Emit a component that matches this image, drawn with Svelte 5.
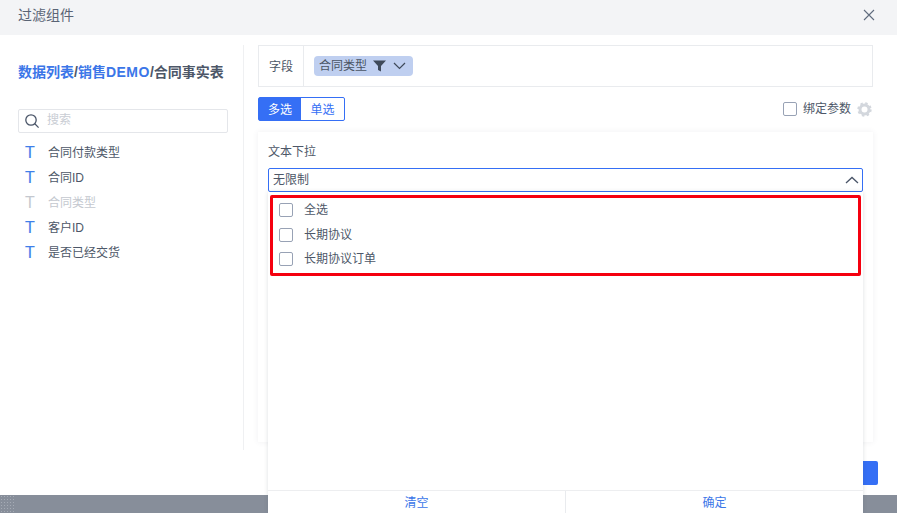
<script>
  const fields = [
    { name: '合同付款类型' },
    { name: '合同ID' },
    { name: '合同类型', off: true },
    { name: '客户ID' },
    { name: '是否已经交货' }
  ];
  const options = ['全选', '长期协议', '长期协议订单'];
</script>

<div class="page">
  <header class="head">
    <span class="title">过滤组件</span>
    <svg class="close" width="12" height="12" viewBox="0 0 12 12"><path d="M1 1l10 10M11 1L1 11" stroke="#5f6b7d" stroke-width="1.1" fill="none"/></svg>
  </header>

  <main class="main">
    <aside class="side">
      <div class="crumb"><span class="blue">数据列表</span>/<span class="blue">销售<span class="latin">DEMO</span></span>/合同事实表</div>
      <div class="search">
        <svg width="16" height="16" viewBox="0 0 16 16"><circle cx="7" cy="7" r="5.2" stroke="#4a5568" stroke-width="1.3" fill="none"/><path d="M10.8 10.8l3.8 3.8" stroke="#4a5568" stroke-width="1.3"/></svg>
        <span>搜索</span>
      </div>
      <ul class="fields">
        {#each fields as f}
          <li class:off={f.off}><b>T</b><span>{f.name}</span></li>
        {/each}
      </ul>
    </aside>

    <section class="right">
      <div class="fieldbox">
        <div class="label">字段</div>
        <div class="tagcell">
          <div class="tag">
            <span>合同类型</span>
            <svg class="funnel" width="13" height="12" viewBox="0 0 13 12"><path d="M0 0.500h13L8 6v5.500L5 10V6z" fill="#3f4a5a"/></svg>
            <svg width="13" height="8" viewBox="0 0 13 8"><path d="M1 1l5.500 5.500L12 1" stroke="#3f4a5a" stroke-width="1.200" fill="none"/></svg>
          </div>
        </div>
      </div>

      <div class="bar">
        <div class="seg"><span class="on">多选</span><span>单选</span></div>
        <div class="bind">
          <i class="check"></i>
          <span>绑定参数</span>
          <svg width="15" height="15" viewBox="0 0 15 15"><circle cx="7.500" cy="7.500" r="4.500" stroke="#d3d7dd" stroke-width="3" fill="none"/><circle cx="7.500" cy="7.500" r="6.200" stroke="#d3d7dd" stroke-width="2" stroke-dasharray="2.400 2.470" fill="none"/></svg>
        </div>
      </div>

      <div class="card">
        <div class="cardtitle">文本下拉</div>
        <div class="selectwrap">
          <div class="select">
            <span>无限制</span>
            <svg width="14" height="8" viewBox="0 0 14 8"><path d="M1 7l6-5.500L13 7" stroke="#4a5568" stroke-width="1.300" fill="none"/></svg>
          </div>
          <div class="drop">
            <div class="marked">
              {#each options as o}
                <label class="opt"><i class="check"></i><span>{o}</span></label>
              {/each}
            </div>
            <div class="dropfoot"><span>清空</span><span>确定</span></div>
          </div>
        </div>
      </div>

      <div class="okrow"><div class="okbtn"></div></div>
    </section>
  </main>

  <footer class="band"><div class="dots"></div></footer>
</div>

<style>
  :global(body) { margin: 0; background: #fff; }
  * { box-sizing: border-box; }
  .page {
    width: 897px; height: 513px; overflow: hidden; display: flex; flex-direction: column;
    font-family: "Liberation Sans", "Noto Sans CJK SC", sans-serif; font-size: 12px; color: #4d5768;
  }
  .head {
    height: 35px; flex: none; display: flex; align-items: center; justify-content: space-between;
    padding: 0 22px 0 18px; background: #f3f4f6;
    background-image: radial-gradient(#e9ebee 0.6px, transparent 0.7px); background-size: 4px 4px;
  }
  .title { font-size: 14px; line-height: 14px; color: #5a6475; margin-top: -5px; }
  .close { margin-top: -5px; }
  .main { flex: 1; display: flex; min-height: 0; }
  .side { width: 244px; flex: none; height: 405px; margin-top: 10px; padding: 0 15px 0 18px; border-right: 1px solid #eff0f2; }
  .crumb { height: 36px; margin-top: 9px; line-height: 36px; font-size: 14px; font-weight: 700; color: #4d5768; white-space: nowrap; }
  .blue { color: #3b76e8; }
  .latin { letter-spacing: 0.5px; }
  .search {
    height: 24px; margin-top: 19px; display: flex; align-items: center; gap: 7px; padding-left: 5px;
    border: 1px solid #e4e6ea; border-radius: 2px; color: #c9cdd4;
  }
  .search span { line-height: 12px; margin-top: -2px; }
  .fields { list-style: none; margin: 7px 0 0; padding: 0; }
  .fields li { height: 25px; display: flex; align-items: center; }
  .fields li span { line-height: 12px; }
  .fields b { width: 30px; padding-left: 7px; font: 400 16px "Liberation Sans", sans-serif; color: #3f7fea; -webkit-text-stroke: 0.2px #3f7fea; }
  .fields .off, .fields .off b { color: #c4c8cf; -webkit-text-stroke: 0; }
  .right { width: 615px; margin: 10px 0 0 14px; flex: none; }
  .fieldbox { height: 42px; display: flex; border: 1px solid #e9ebee; }
  .label { width: 45px; line-height: 42px; text-align: center; border-right: 1px solid #e9ebee; }
  .tagcell { flex: 1; padding: 10px; }
  .tag {
    width: 99px; height: 20px; display: flex; align-items: center; gap: 6px; padding-left: 5px;
    background: #bfcff0; border-radius: 4px; color: #4a5464;
  }
  .tag span { line-height: 12px; }
  .funnel { margin-right: 1px; }
  .bar { display: flex; justify-content: space-between; align-items: center; margin-top: 10px; }
  .seg { display: flex; width: 87px; height: 24px; border: 1px solid #356ff5; border-radius: 2px; color: #356ff5; }
  .seg span { flex: 1; line-height: 24px; text-align: center; }
  .seg .on { flex: none; width: 42px; background: #356ff5; color: #fff; }
  .bind { display: flex; align-items: center; gap: 6px; margin-right: 1px; }
  .bind span { line-height: 12px; }
  .check { display: block; width: 14px; height: 14px; border: 1px solid #98a2b5; border-radius: 2px; background: #fff; flex: none; }
  .card {
    height: 310px; margin-top: 11px; padding: 10px; background: #fff;
    box-shadow: 0 0 6px rgba(60, 70, 90, 0.08);
  }
  .cardtitle { height: 26px; line-height: 20px; color: #4d5768; }
  .selectwrap { position: relative; }
  .select {
    height: 24px; display: flex; align-items: center; justify-content: space-between; padding: 0 3px 0 4px;
    border: 1px solid #356ff5; border-radius: 2px; background: #fff; color: #4d5768;
  }
  .select span { line-height: 12px; }
  .drop {
    position: absolute; left: 0; top: 24px; width: 595px; height: 321px; display: flex; flex-direction: column;
    background: #fff; box-shadow: 0 0 4px rgba(60, 70, 90, 0.18); padding: 3px 2px 0;
  }
  .marked { height: 81px; border: 3px solid #f5000f; border-radius: 2px; padding: 0 6px; }
  .opt { height: 24.500px; display: flex; align-items: center; gap: 11px; }
  .opt span { line-height: 12px; }
  .dropfoot {
    display: flex; margin: auto -2px 0; height: 23px; border-top: 1px solid #edeef0; color: #3b76e8;
  }
  .dropfoot span { flex: 1; text-align: center; line-height: 25px; }
  .dropfoot span + span { border-left: 1px solid #e9ebee; }
  .okrow { display: flex; justify-content: flex-end; margin-top: 19px; }
  .okbtn { width: 15px; height: 24px; margin-right: -5px; background: #356ff5; border-radius: 0 2px 2px 0; }
  .band { height: 18px; flex: none; background: #878e9a; }
  .dots {
    width: 16px; height: 18px;
    background-image: radial-gradient(#a5abb5 0.6px, transparent 0.7px);
    background-size: 3px 3px;
  }
</style>
